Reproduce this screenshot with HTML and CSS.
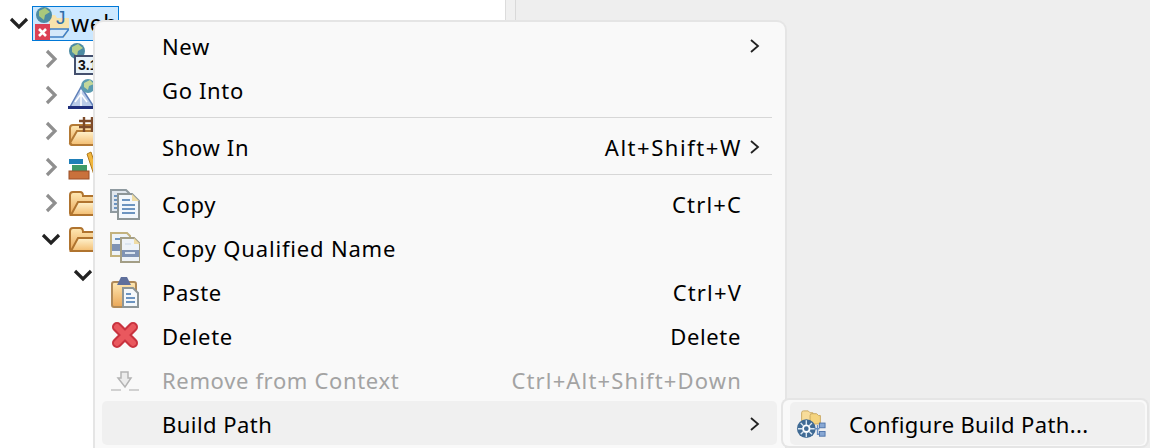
FILE: index.html
```html
<!DOCTYPE html>
<html lang="en">
<head>
    <meta charset="UTF-8">
    <title>Build Path menu</title>
    <link rel="stylesheet" href="styles.css">
</head>
<body>
    <div class="tree">
        <div class="row root">
            <svg class="twist" viewBox="0 0 20 14"><path d="M2 3l8 8 8-8" class="dark"/></svg>
            <div class="selected">
                <svg class="icon" viewBox="0 0 34 34">
                    <defs>
                        <linearGradient id="folder" x1="0" y1="0" x2="0" y2="1">
                            <stop offset="0" stop-color="#fff3cf"/>
                            <stop offset="1" stop-color="#f3bd70"/>
                        </linearGradient>
                        <linearGradient id="sheet" x1="0" y1="0" x2="0" y2="1">
                            <stop offset="0" stop-color="#ffe9b4"/>
                            <stop offset="1" stop-color="#e9a656"/>
                        </linearGradient>
                    </defs>
                    <path d="M14 9h6l2 3h12v10l-4 9H14z" fill="#f8e3ac"/>
                    <path d="M15 23h19l-6 8H11z" fill="#d4e8fa" stroke="#3f7fc4" stroke-width="1.6"/>
                    <circle cx="9" cy="9" r="8" fill="#4c8ba3"/>
                    <path d="M4 5l6-3 5 4-5 3-1 5-5-4z" fill="#a9c87c"/>
                    <rect x="0" y="18" width="15" height="16" fill="#dc4055"/>
                    <path d="M4 23l7 7M11 23l-7 7" stroke="#fff" stroke-width="2.6"/>
                    <text x="21" y="18" class="badge-j">J</text>
                </svg>
                <span class="name">web</span>
            </div>
        </div>
        <div class="row child">
            <svg class="twist" viewBox="0 0 14 20"><path d="M3 2l8 8-8 8" class="grey"/></svg>
            <svg class="icon" viewBox="0 0 34 34">
                <circle cx="9" cy="9" r="8" fill="#4c8ba3"/>
                <path d="M4 5l6-3 5 4-5 3-1 5-5-4z" fill="#b7cf8a"/>
                <rect x="7" y="14" width="26" height="18" fill="#e8f3fa" stroke="#44506e" stroke-width="2"/>
                <text x="10" y="28" class="badge-num">3.1</text>
            </svg>
        </div>
        <div class="row child">
            <svg class="twist" viewBox="0 0 14 20"><path d="M3 2l8 8-8 8" class="grey"/></svg>
            <svg class="icon" viewBox="0 0 34 34">
                <path d="M13 9L2 29h24z" fill="#b9cbe8" stroke="#5f7fb8" stroke-width="1.5"/>
                <path d="M13 12v17M7 24l6-8 6 8" stroke="#fff" stroke-width="1.5" fill="none"/>
                <rect x="0" y="28" width="28" height="3" fill="#1f2f7c"/>
                <circle cx="20" cy="8" r="7" fill="#5b9bb0"/>
                <path d="M16 5l6-3 4 4-5 2-1 4-4-3z" fill="#c3d79a"/>
            </svg>
        </div>
        <div class="row child">
            <svg class="twist" viewBox="0 0 14 20"><path d="M3 2l8 8-8 8" class="grey"/></svg>
            <svg class="icon" viewBox="0 0 34 34">
                <path d="M2 14q0-3 3-3h24v20H4q-2 0-2-2z" fill="url(#sheet)" stroke="#b47a35" stroke-width="2"/>
                <path d="M2 29l7-12h24l-5 14H4z" fill="url(#folder)" stroke="#b47a35" stroke-width="2"/>
                <path d="M16 3v15M24 3v15M11 7h18M11 13h18" stroke="#7c4a2a" stroke-width="2.4" fill="none"/>
            </svg>
        </div>
        <div class="row child">
            <svg class="twist" viewBox="0 0 14 20"><path d="M3 2l8 8-8 8" class="grey"/></svg>
            <svg class="icon" viewBox="0 0 34 34">
                <rect x="1" y="9" width="14" height="5" fill="#1f7fb8"/>
                <rect x="4" y="15" width="15" height="6" fill="#3f9a68"/>
                <rect x="1" y="21" width="20" height="8" fill="#c9713c" stroke="#9a4f26"/>
                <path d="M19 4l4-2 8 24-4 2z" fill="#f2b63c" stroke="#b07a20"/>
            </svg>
        </div>
        <div class="row child">
            <svg class="twist" viewBox="0 0 14 20"><path d="M3 2l8 8-8 8" class="grey"/></svg>
            <svg class="icon" viewBox="0 0 34 34">
                <path d="M2 9q0-3 3-3h7q3 0 3 4h14q2 0 2 2v17H4q-2 0-2-2z" fill="url(#sheet)" stroke="#b0742f" stroke-width="2"/>
                <path d="M3 29l7-13h23l-6 13z" fill="url(#folder)" stroke="#b0742f" stroke-width="2"/>
            </svg>
        </div>
        <div class="row child">
            <svg class="twist" viewBox="0 0 20 14"><path d="M2 3l8 8 8-8" class="dark"/></svg>
            <svg class="icon" viewBox="0 0 34 34">
                <path d="M2 9q0-3 3-3h7q3 0 3 4h14q2 0 2 2v17H4q-2 0-2-2z" fill="url(#sheet)" stroke="#b0742f" stroke-width="2"/>
                <path d="M3 29l7-13h23l-6 13z" fill="url(#folder)" stroke="#b0742f" stroke-width="2"/>
            </svg>
        </div>
        <div class="row grandchild">
            <svg class="twist" viewBox="0 0 20 14"><path d="M2 3l8 8 8-8" class="dark"/></svg>
        </div>
    </div>
    <div class="sash"></div>
    <div class="editor"></div>

    <div class="menu">
        <div class="item">
            <span></span><span>New</span><span></span>
            <svg class="arrow" viewBox="0 0 12 16"><path d="M2 2l7 6-7 6"/></svg>
        </div>
        <div class="item">
            <span></span><span>Go Into</span>
        </div>
        <div class="sep"></div>
        <div class="item">
            <span></span><span>Show In</span><span class="keys wide">Alt+Shift+W</span>
            <svg class="arrow" viewBox="0 0 12 16"><path d="M2 2l7 6-7 6"/></svg>
        </div>
        <div class="sep"></div>
        <div class="item">
            <svg class="mi" viewBox="0 0 30 32">
                <path d="M1 2h15l3 3v19H1z" fill="#dfe6ee" stroke="#8f9aa0" stroke-width="2"/>
                <path d="M4 8h6M4 12h6M4 16h6M4 20h6" stroke="#6c94c0" stroke-width="2"/>
                <path d="M8 6h14l7 7v18H8z" fill="#f2f7fc" stroke="#8d9698" stroke-width="2"/>
                <path d="M22 6v7h7z" fill="#efdca4"/>
                <path d="M12 12h8M12 17h13M12 21h13M12 25h13" stroke="#6c94c0" stroke-width="2"/>
            </svg>
            <span>Copy</span><span class="keys">Ctrl+C</span>
        </div>
        <div class="item">
            <svg class="mi" viewBox="0 0 30 32">
                <path d="M1 1h16l3 3v20H1z" fill="#eef3f8" stroke="#c3b27e" stroke-width="2"/>
                <rect x="2" y="12" width="17" height="7" fill="#7f93b4"/>
                <path d="M5 7h8" stroke="#6c94c0" stroke-width="2"/>
                <path d="M11 6h13l6 6v18H11z" fill="#eef3f8" stroke="#a39e86" stroke-width="2"/>
                <path d="M24 6v6h6z" fill="#efdca4"/>
                <rect x="12" y="18" width="17" height="7" fill="#7f93b4"/>
                <path d="M15 12h6M15 21h10" stroke="#dbe5f0" stroke-width="2"/>
            </svg>
            <span class="long">Copy Qualified Name</span>
        </div>
        <div class="item">
            <svg class="mi" viewBox="0 0 30 32">
                <rect x="2" y="6" width="24" height="25" rx="2" fill="url(#sheet)" stroke="#b08a58" stroke-width="2"/>
                <path d="M7 9l2-4 2-4h6l2 4 2 4z" fill="#5f6f9c"/>
                <path d="M13 12h10l5 5v14H13z" fill="#f4f8fb" stroke="#8d9698" stroke-width="2"/>
                <path d="M16 18h5M16 22h9M16 26h9" stroke="#6c94c0" stroke-width="2"/>
            </svg>
            <span>Paste</span><span class="keys">Ctrl+V</span>
        </div>
        <div class="item">
            <svg class="mi" viewBox="0 0 30 32">
                <path d="M7 7l16 16M23 7L7 23" stroke="#c9333f" stroke-width="10" stroke-linecap="round"/>
                <path d="M7 7l16 16M23 7L7 23" stroke="#e9585e" stroke-width="6" stroke-linecap="round"/>
            </svg>
            <span>Delete</span><span class="key-word">Delete</span>
        </div>
        <div class="item disabled">
            <svg class="mi" viewBox="0 0 30 32">
                <path d="M1 26h10M19 26h10" stroke="#c4c4c4" stroke-width="1.5"/>
                <path d="M11 8h7v6h3l-6 9-7-9h3z" fill="#ececec" stroke="#b4b4b4" stroke-width="1.5"/>
            </svg>
            <span>Remove from Context</span><span class="keys">Ctrl+Alt+Shift+Down</span>
        </div>
        <div class="item active">
            <span></span><span class="short">Build Path</span><span></span>
            <svg class="arrow" viewBox="0 0 12 16"><path d="M2 2l7 6-7 6"/></svg>
        </div>
    </div>

    <div class="submenu">
        <div class="subitem">
            <svg class="mi" viewBox="0 0 32 32">
                <path d="M6 4q0-2 2-2h5l2 2h3v10H6z" fill="#f7dc9a" stroke="#c9a860"/>
                <path d="M15 7q0-2 2-2h5l2 2h2v9H15z" fill="#f5d47f" stroke="#c9a860"/>
                <circle cx="11" cy="21" r="10" fill="#3f6a94"/>
                <circle cx="11" cy="21" r="3.5" fill="none" stroke="#fff" stroke-width="2"/>
                <path d="M11 12v5M11 25v5M2 21h5M15 21h5M5 15l3 3M14 24l3 3M17 15l-3 3M8 24l-3 3" stroke="#dbe7f2" stroke-width="1.5"/>
                <path d="M20 21h5M23 17v10h3" stroke="#6a8fc0" stroke-width="1.5" fill="none"/>
                <rect x="25" y="15" width="6" height="5" fill="#88a8d4" stroke="#4f74aa"/>
                <rect x="25" y="24" width="6" height="5" fill="#88a8d4" stroke="#4f74aa"/>
            </svg>
            <span>Configure Build Path...</span>
        </div>
    </div>
</body>
</html>
```

FILE: styles.css
```css
html, body {
    margin: 0;
    height: 448px;
    overflow: hidden;
}
body {
    display: flex;
    background: #eeeeee;
    font-family: "Noto Sans", "Open Sans", sans-serif;
    font-size: 22px;
    letter-spacing: 0.65px;
    color: #000;
}

/* tree on the left */
.tree {
    width: 505px;
    padding-top: 5px;
    background: #fff;
    border-right: 1px solid #dcdcdc;
}
.row {
    display: flex;
    align-items: center;
    height: 36px;
}
.root { padding-left: 9px; }
.child { padding-left: 41px; }
.grandchild { padding-left: 73px; }
.twist {
    width: 20px;
    height: 20px;
    flex: none;
}
.twist path {
    fill: none;
    stroke-width: 3.2;
}
.twist .dark { stroke: #222; }
.twist .grey { stroke: #8f8f8f; }
.selected {
    display: flex;
    align-items: center;
    gap: 2px;
    width: 87px;
    height: 35px;
    margin-left: 3px;
    padding-left: 2px;
    box-sizing: border-box;
    background: #cce8ff;
    border: 1px solid #0078d7;
}
.icon {
    width: 34px;
    height: 34px;
    flex: none;
}
.child .icon { margin-left: 7px; }
.name {
    font-size: 23px;
    line-height: 34px;
}
.badge-j {
    font-family: "Liberation Sans", sans-serif;
    font-size: 19px;
    letter-spacing: 0;
    fill: #2f6ea8;
}
.badge-num {
    font-family: "Liberation Sans", sans-serif;
    font-size: 14px;
    font-weight: 700;
    letter-spacing: 0;
    fill: #111;
}

.sash {
    width: 9px;
    background: #f0f0f0;
    border-right: 1px solid #d9d9d9;
}
.editor {
    flex: 1;
    background: #eeeeee;
}

/* context menu */
.menu {
    position: absolute;
    left: 95px;
    top: 22px;
    width: 690px;
    height: 440px;
    padding-top: 1px;
    box-sizing: border-box;
    background: #f9f9f9;
    border-radius: 8px;
    box-shadow: 0 0 0 2px #e5e5e5;
}
.item {
    display: grid;
    grid-template-columns: 60px 1fr auto 36px;
    align-items: center;
    height: 44px;
    padding-top: 2px;
    box-sizing: border-box;
    margin: 0 8px 0 7px;
    border-radius: 5px;
}
.keys { letter-spacing: 1.15px; margin-right: -1px; }
.keys.wide { letter-spacing: 1.55px; }
.long { letter-spacing: 0.82px; }
.short { letter-spacing: 0.45px; }
.mi {
    width: 30px;
    height: 32px;
    margin-left: 8px;
}
.arrow {
    width: 12px;
    height: 16px;
    margin-left: 8px;
}
.arrow path {
    fill: none;
    stroke: #222;
    stroke-width: 1.8;
}
.sep {
    height: 1px;
    margin: 6px 13px;
    background: #d7d7d7;
}
.disabled { color: #a3a3a3; }
.active { background: #f0f0f0; }

/* submenu opened from Build Path */
.submenu {
    position: absolute;
    left: 783px;
    top: 400px;
    width: 364px;
    height: 46px;
    padding: 2px 2px 1px 7px;
    box-sizing: border-box;
    background: #f9f9f9;
    border-radius: 6px;
    box-shadow: 0 0 0 2px #e5e5e5;
}
.subitem {
    display: flex;
    align-items: center;
    height: 43px;
    gap: 23px;
    letter-spacing: 0.35px;
    background: #f0f0f0;
    border-radius: 5px;
}
.subitem .mi { margin-left: 6px; }
```
